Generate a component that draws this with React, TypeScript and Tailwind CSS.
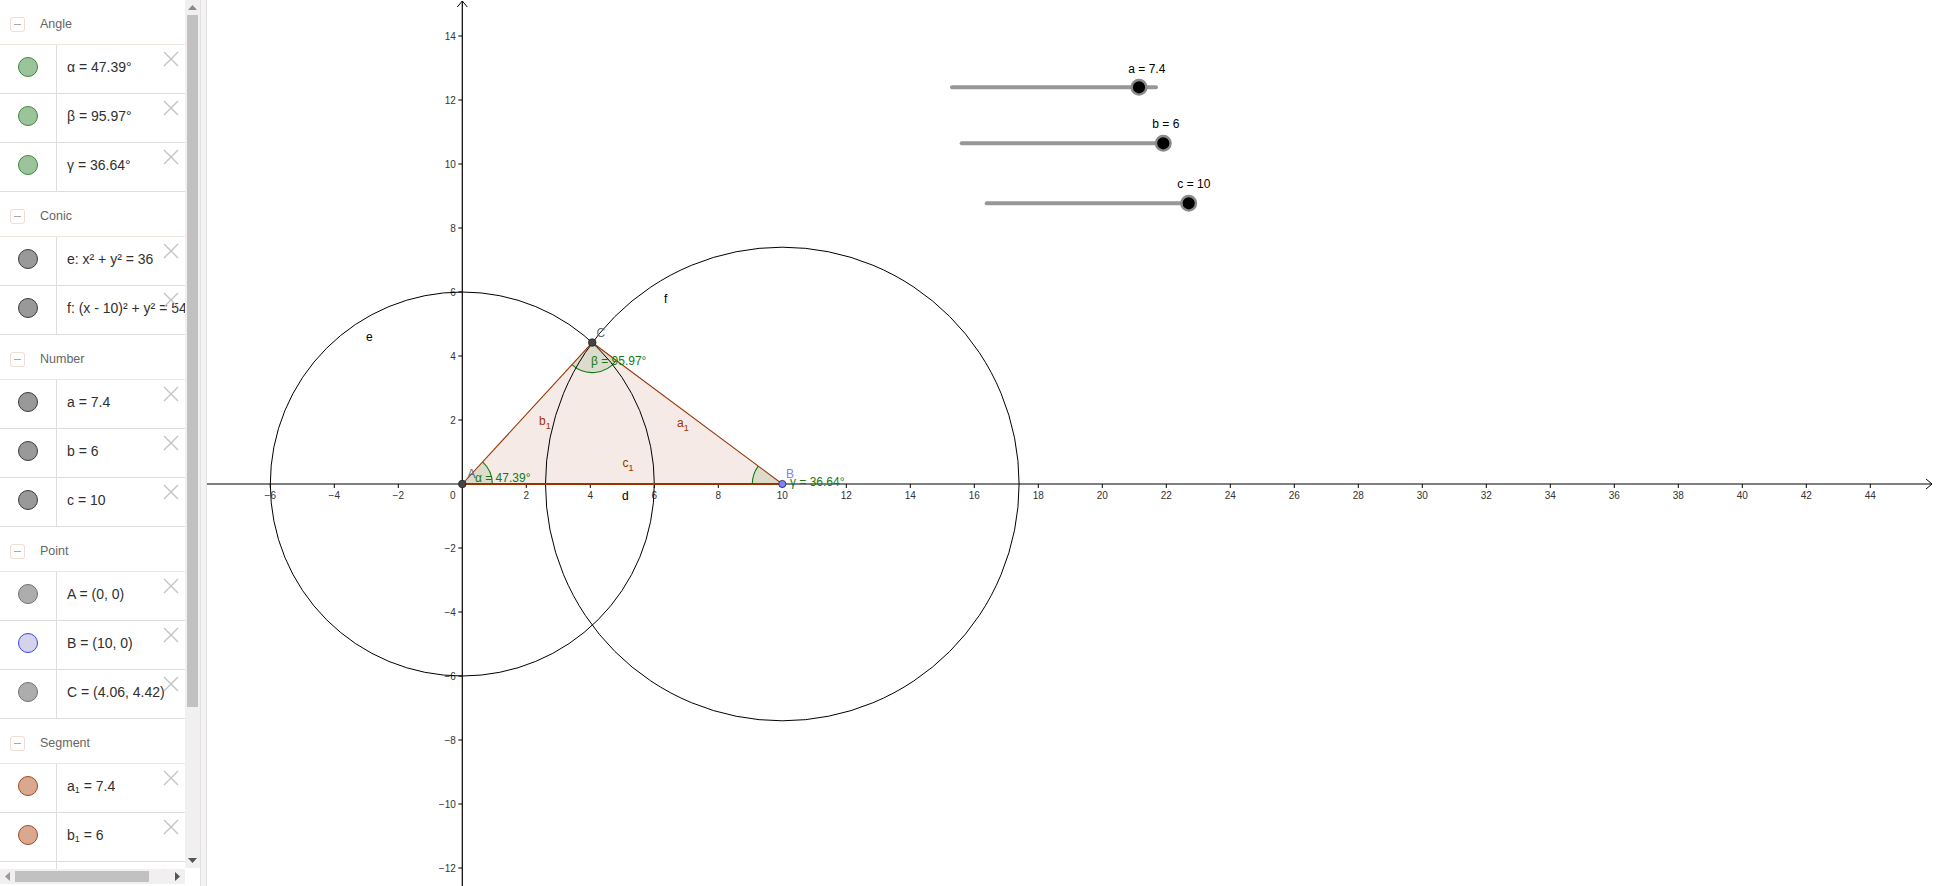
import type { ReactNode } from "react";

// ---------- algebra panel ----------
type Item = { dot: string; label: ReactNode };
type Section = { title: string; items: Item[] };

const DOT_ANGLE = "bg-[#9cc49c] border-[#3c873c]";
const DOT_GRAY = "bg-[#999999] border-[#3a3a3a]";
const DOT_POINT = "bg-[#adadad] border-[#707070]";
const DOT_BLUE = "bg-[#d3d3ea] border-[#3d3dff]";
const DOT_SEG = "bg-[#d8a891] border-[#a34a1f]";

const Sub = ({ c, n, rest }: { c: string; n: string; rest: string }) => (
  <span>
    {c}
    <sub className="text-[9px]">{n}</sub>
    {"\u00a0" + rest}
  </span>
);

const sections: Section[] = [
  {
    title: "Angle",
    items: [
      { dot: DOT_ANGLE, label: "α = 47.39°" },
      { dot: DOT_ANGLE, label: "β = 95.97°" },
      { dot: DOT_ANGLE, label: "γ = 36.64°" },
    ],
  },
  {
    title: "Conic",
    items: [
      { dot: DOT_GRAY, label: "e: x² + y² = 36" },
      { dot: DOT_GRAY, label: "f: (x - 10)² + y² = 54.76" },
    ],
  },
  {
    title: "Number",
    items: [
      { dot: DOT_GRAY, label: "a = 7.4" },
      { dot: DOT_GRAY, label: "b = 6" },
      { dot: DOT_GRAY, label: "c = 10" },
    ],
  },
  {
    title: "Point",
    items: [
      { dot: DOT_POINT, label: "A = (0, 0)" },
      { dot: DOT_BLUE, label: "B = (10, 0)" },
      { dot: DOT_POINT, label: "C = (4.06, 4.42)" },
    ],
  },
  {
    title: "Segment",
    items: [
      { dot: DOT_SEG, label: <Sub c="a" n="1" rest="= 7.4" /> },
      { dot: DOT_SEG, label: <Sub c="b" n="1" rest="= 6" /> },
      { dot: DOT_SEG, label: <Sub c="c" n="1" rest="= 10" /> },
    ],
  },
];

function CloseX() {
  return (
    <svg width="16" height="16" viewBox="0 0 16 16" className="absolute right-[6px] top-[6px]">
      <path d="M1 1 L15 15 M15 1 L1 15" stroke="#c3c3c3" strokeWidth="1.4" fill="none" />
    </svg>
  );
}

function Header({ title }: { title: string }) {
  return (
    <div className="flex h-[45px] items-center border-b border-[#f3e6e1] pl-[10px] pt-[5px]">
      <div className="flex h-[15px] w-[15px] items-center justify-center rounded-[3px] border border-[#f0dcd6]">
        <span className="h-px w-[7px] bg-[#a5a5a5]" />
      </div>
      <span className="ml-[15px] text-[12.5px] text-[#666666]">{title}</span>
    </div>
  );
}

function Row({ item }: { item: Item }) {
  return (
    <div className="relative flex h-[49px] border-b border-[#dedede]">
      <div className="flex w-[57px] shrink-0 items-center justify-center border-r border-[#dedede] pb-[4px]">
        <span className={`h-5 w-5 rounded-full border ${item.dot}`} />
      </div>
      <div className="flex flex-1 items-center overflow-hidden whitespace-nowrap pb-[4px] pl-[10px] text-[14px] text-[#303030]">
        {item.label}
      </div>
      <CloseX />
    </div>
  );
}

function AlgebraPanel() {
  return (
    <aside className="flex h-full w-[207px] shrink-0">
      <div className="flex w-[200px] flex-col">
        <div className="flex h-[869px]">
          <div className="w-[185px] overflow-hidden">
            {sections.map((s) => (
              <div key={s.title}>
                <Header title={s.title} />
                {s.items.map((it, i) => (
                  <Row key={i} item={it} />
                ))}
              </div>
            ))}
          </div>
          {/* vertical scrollbar */}
          <div className="flex h-[868px] w-[15px] flex-col bg-[#f1efef]">
            <div className="flex h-[15px] items-center justify-center">
              <svg width="9" height="5" viewBox="0 0 9 5"><path d="M0 5 L4.5 0 L9 5 Z" fill="#8a8a8a" /></svg>
            </div>
            <div className="ml-[2px] h-[692px] w-[11px] bg-[#c1c1c1]" />
            <div className="flex-1" />
            <div className="flex h-[15px] items-center justify-center">
              <svg width="9" height="5" viewBox="0 0 9 5"><path d="M0 0 L9 0 L4.5 5 Z" fill="#555555" /></svg>
            </div>
          </div>
        </div>
        {/* horizontal scrollbar */}
        <div className="flex h-[15px]">
          <div className="flex w-[185px] items-center bg-[#f1efef]">
            <div className="flex w-[15px] justify-center">
              <svg width="5" height="9" viewBox="0 0 5 9"><path d="M5 0 L0 4.5 L5 9 Z" fill="#9a9a9a" /></svg>
            </div>
            <div className="h-[11px] w-[134px] bg-[#c1c1c1]" />
            <div className="flex-1" />
            <div className="flex w-[15px] justify-center">
              <svg width="5" height="9" viewBox="0 0 5 9"><path d="M0 0 L5 4.5 L0 9 Z" fill="#555555" /></svg>
            </div>
          </div>
        </div>
      </div>
      {/* splitter */}
      <div className="h-full w-[7px] border-x border-[#e2e2e2] bg-[#f4f3f3]" />
    </aside>
  );
}

// ---------- graphics view ----------
const OX = 462.3;
const OY = 484;
const U = 32;
const P = (x: number, y: number): [number, number] => [OX + U * x, OY - U * y];
const A = P(0, 0);
const B = P(10, 0);
const C = P(4.06, 4.42);
const rad = (d: number) => (d * Math.PI) / 180;

function arcPts(c: [number, number], r: number, a0: number, a1: number) {
  const s = [c[0] + r * Math.cos(rad(a0)), c[1] - r * Math.sin(rad(a0))];
  const e = [c[0] + r * Math.cos(rad(a1)), c[1] - r * Math.sin(rad(a1))];
  return { s, e };
}
function sector(c: [number, number], r: number, a0: number, a1: number) {
  const { s, e } = arcPts(c, r, a0, a1);
  return `M${c[0]} ${c[1]} L${s[0]} ${s[1]} A${r} ${r} 0 0 0 ${e[0]} ${e[1]} Z`;
}
function arc(c: [number, number], r: number, a0: number, a1: number) {
  const { s, e } = arcPts(c, r, a0, a1);
  return `M${s[0]} ${s[1]} A${r} ${r} 0 0 0 ${e[0]} ${e[1]}`;
}

const angA = (Math.atan2(4.42, 4.06) * 180) / Math.PI;
const angB = (Math.atan2(4.42, 5.94) * 180) / Math.PI;
const angles: [[number, number], number, number][] = [
  [A, 0, angA],
  [C, 180 + angA, 360 - angB],
  [B, 180 - angB, 180],
];

const FONT = "Liberation Sans, Arial, sans-serif";
const xTicks = Array.from({ length: 26 }, (_, i) => -6 + i * 2).filter((k) => k !== 0);
const yTicks = Array.from({ length: 14 }, (_, i) => -12 + i * 2).filter((k) => k !== 0);
const fmt = (k: number) => (k < 0 ? `−${-k}` : `${k}`);

function Slider({ x0, x1, y, knob, label, lx, ly }: { x0: number; x1: number; y: number; knob: number; label: string; lx: number; ly: number }) {
  return (
    <g>
      <line x1={x0} y1={y} x2={x1} y2={y} stroke="#979797" strokeWidth="4" strokeLinecap="round" />
      <circle cx={knob} cy={y} r="7.3" fill="#000" stroke="#8a8a8a" strokeWidth="2.4" />
      <text x={lx} y={ly} fontSize="12" fill="#000" fontFamily={FONT}>{label}</text>
    </g>
  );
}

function Graphics() {
  return (
    <div className="h-full flex-1 bg-white">
      <svg width="1729" height="886" viewBox="207 0 1729 886" fontFamily={FONT}>
        {/* axes */}
        <line x1="207" y1={OY} x2="1932" y2={OY} stroke="#000" strokeWidth="1.2" />
        <path d={`M1926 ${OY - 5} L1932 ${OY} L1926 ${OY + 5}`} stroke="#000" strokeWidth="1" fill="none" />
        <line x1={OX} y1="886" x2={OX} y2="1" stroke="#000" strokeWidth="1.2" />
        <path d={`M${OX - 5} 7 L${OX} 1 L${OX + 5} 7`} stroke="#000" strokeWidth="1" fill="none" />
        {xTicks.map((k) => {
          const x = OX + U * k;
          return (
            <g key={`x${k}`}>
              <line x1={x} y1={OY} x2={x} y2={OY + 4} stroke="#000" strokeWidth="1" />
              <text x={x} y={OY + 14.5} fontSize="10" fill="#333" textAnchor="middle">{fmt(k)}</text>
            </g>
          );
        })}
        {yTicks.map((k) => {
          const y = OY - U * k;
          return (
            <g key={`y${k}`}>
              <line x1={OX - 4} y1={y} x2={OX} y2={y} stroke="#000" strokeWidth="1" />
              <text x={OX - 6.5} y={y + 3.7} fontSize="10" fill="#333" textAnchor="end">{fmt(k)}</text>
            </g>
          );
        })}
        <text x={OX - 9.6} y={OY + 14.5} fontSize="10" fill="#333" textAnchor="middle">0</text>

        {/* triangle */}
        <polygon points={`${A.join(",")} ${B.join(",")} ${C.join(",")}`} fill="rgba(153,51,0,0.1)" stroke="none" />
        {angles.map(([c, a0, a1], i) => (
          <path key={`s${i}`} d={sector(c, 30, a0, a1)} fill="rgba(0,100,0,0.1)" />
        ))}
        {angles.map(([c, a0, a1], i) => (
          <path key={`a${i}`} d={arc(c, 30, a0, a1)} fill="none" stroke="#117a11" strokeWidth="1.1" />
        ))}

        {/* circles */}
        <circle cx={A[0]} cy={A[1]} r={6 * U} fill="none" stroke="#000" strokeWidth="1" />
        <circle cx={B[0]} cy={B[1]} r={7.4 * U} fill="none" stroke="#000" strokeWidth="1" />

        {/* segments */}
        <line x1={B[0]} y1={B[1]} x2={C[0]} y2={C[1]} stroke="#993300" strokeWidth="1.1" />
        <line x1={A[0]} y1={A[1]} x2={C[0]} y2={C[1]} stroke="#993300" strokeWidth="1.1" />
        <line x1={A[0]} y1={A[1]} x2={B[0]} y2={B[1]} stroke="#993300" strokeWidth="2" />

        {/* points */}
        <circle cx={A[0]} cy={A[1]} r="3.8" fill="#444" stroke="#222" strokeWidth="0.8" />
        <circle cx={C[0]} cy={C[1]} r="3.8" fill="#444" stroke="#222" strokeWidth="0.8" />
        <circle cx={B[0]} cy={B[1]} r="3.6" fill="#7f7fff" stroke="#333" strokeWidth="0.9" />

        {/* labels */}
        <text x="366" y="340.7" fontSize="12" fill="#000">e</text>
        <text x="664" y="302.7" fontSize="12" fill="#000">f</text>
        <text x="622" y="500" fontSize="12" fill="#000">d</text>
        <text x="467.5" y="478.3" fontSize="12" fill="#666">A</text>
        <text x="596.5" y="337.3" fontSize="12" fill="#666">C</text>
        <text x="786" y="478" fontSize="12" fill="#7f7fff">B</text>
        <text x="539" y="425" fontSize="12" fill="#993300">b<tspan fontSize="9" dy="4">1</tspan></text>
        <text x="677" y="426.7" fontSize="12" fill="#993300">a<tspan fontSize="9" dy="4">1</tspan></text>
        <text x="622.5" y="467.3" fontSize="12" fill="#993300">c<tspan fontSize="9" dy="4">1</tspan></text>
        <text x="475" y="481.9" fontSize="12" fill="#137a13">α = 47.39°</text>
        <text x="591" y="365.3" fontSize="12" fill="#137a13">β = 95.97°</text>
        <text x="790" y="485.5" fontSize="12" fill="#137a13">γ = 36.64°</text>

        {/* sliders */}
        <Slider x0={952} x1={1156} y={87.3} knob={1139} label="a = 7.4" lx={1128.3} ly={72.6} />
        <Slider x0={961.7} x1={1163.3} y={143.3} knob={1163.3} label="b = 6" lx={1152.3} ly={128} />
        <Slider x0={986.7} x1={1188.7} y={203.3} knob={1188.7} label="c = 10" lx={1177.3} ly={188.3} />
      </svg>
    </div>
  );
}

export default function App() {
  return (
    <div className="flex h-[886px] w-[1936px] overflow-hidden bg-white font-['Liberation_Sans',Arial,sans-serif]">
      <AlgebraPanel />
      <Graphics />
    </div>
  );
}
